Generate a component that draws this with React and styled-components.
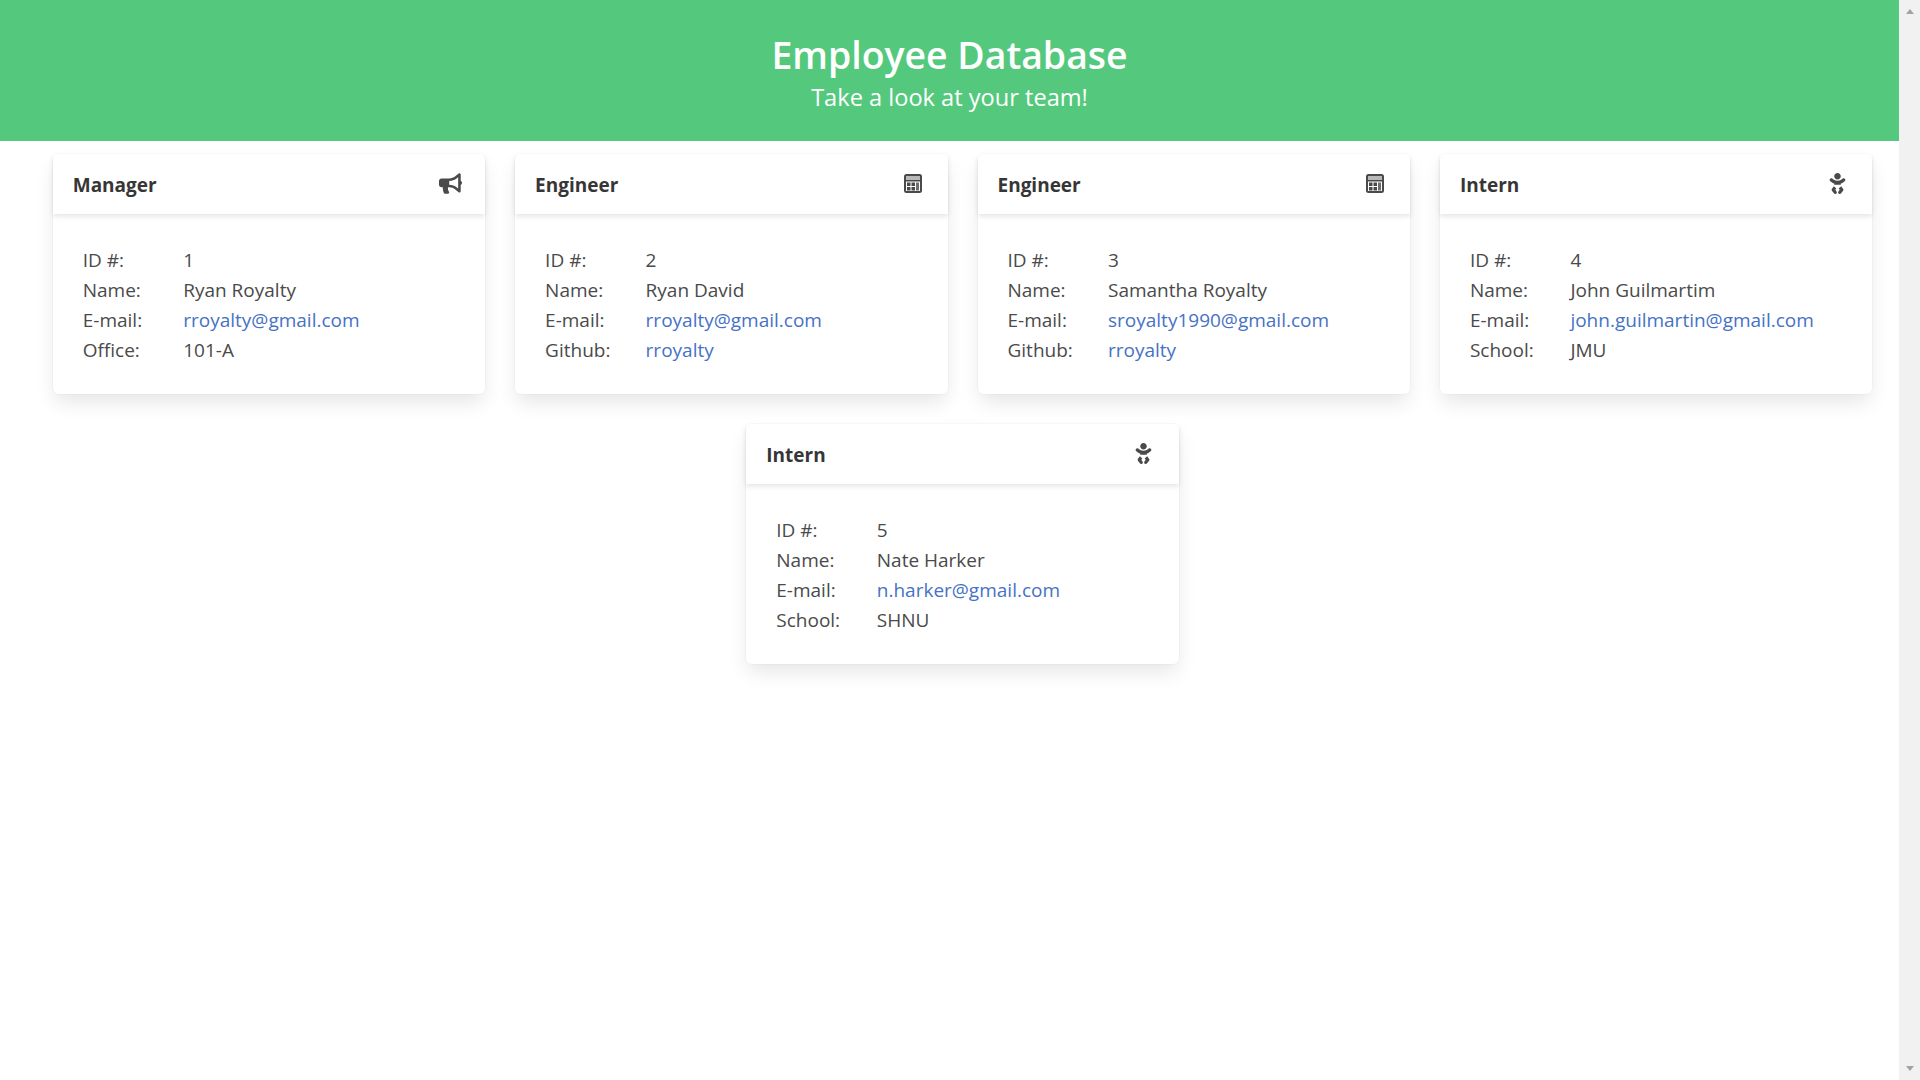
import React from "react";
import styled, { createGlobalStyle } from "styled-components";
import { FaBullhorn, FaBaby } from "react-icons/fa";

const GlobalStyle = createGlobalStyle`
  html, body {
    margin: 0;
    padding: 0;
    height: 100%;
    overflow: hidden;
    background: #fff;
  }
  #root {
    height: 100%;
  }
`;

const Page = styled.div`
  display: flex;
  height: 1080px;
  font-family: "Open Sans", "Noto Sans", sans-serif;
  font-size: 19px;
  line-height: 30px;
  color: #4a4a4a;
`;

const Main = styled.main`
  flex: 1;
  min-width: 0;
`;

const Hero = styled.header`
  height: 141px;
  box-sizing: border-box;
  padding-top: 30px;
  background: #54c97d;
  color: #fff;
  text-align: center;
`;

const Title = styled.h1`
  margin: 0;
  font-size: 37.4px;
  line-height: 50px;
  font-weight: 600;
`;

const Subtitle = styled.h2`
  margin: 0;
  padding-top: 2px;
  font-size: 23.6px;
  line-height: 30px;
  font-weight: 400;
`;

const Cards = styled.section`
  display: flex;
  flex-wrap: wrap;
  justify-content: center;
  gap: 30px;
  padding: 13px 26px 0 52px;
`;

const Card = styled.article`
  width: 432.4px;
  height: 240px;
  background: #fff;
  border-radius: 6px;
  box-shadow: 0 10px 20px -2.5px rgba(10, 10, 10, 0.1),
    0 0 0 1px rgba(10, 10, 10, 0.02);
`;

const CardHeader = styled.div`
  display: flex;
  align-items: center;
  justify-content: space-between;
  height: 60px;
  padding: 2px 23px 0 20px;
  box-sizing: border-box;
  box-shadow: 0 2.5px 5px rgba(10, 10, 10, 0.1);
`;

const CardTitle = styled.span`
  font-weight: 700;
  color: #363636;
`;

const IconBox = styled.span`
  display: flex;
  justify-content: center;
  width: 24px;
  margin-top: -4px;
  color: #4a4a4a;
`;

const Rows = styled.dl`
  display: grid;
  grid-template-columns: 100.5px 1fr;
  margin: 0;
  padding: 31px 30px 29px;
`;

const Label = styled.dt`
  margin: 0;
`;

const Value = styled.dd`
  margin: 0;
`;

const MailLink = styled.a`
  color: #4672c4;
  text-decoration: none;
`;

const Scrollbar = styled.div`
  display: flex;
  flex-direction: column;
  justify-content: space-between;
  align-items: center;
  flex: 0 0 21px;
  padding: 9px 0;
  box-sizing: border-box;
  background: #f1f1f1;
`;

const Arrow = styled.span`
  width: 0;
  height: 0;
  border-left: 4.5px solid transparent;
  border-right: 4.5px solid transparent;
  border-${(p) => (p.$down ? "top" : "bottom")}: 5px solid #a3a3a3;
`;

const CalculatorIcon = () => (
  <svg width="18" height="19" viewBox="0 0 18 19" fill="none">
    <rect x="1" y="1" width="16" height="17" rx="1.5" stroke="currentColor" strokeWidth="2" />
    <rect x="2" y="2" width="14" height="4.5" fill="#b8b8b8" />
    <rect x="2" y="6" width="14" height="1.5" fill="currentColor" />
    <rect x="3" y="8.5" width="3.5" height="3.5" fill="currentColor" />
    <rect x="7.5" y="8.5" width="3.5" height="3.5" fill="currentColor" />
    <rect x="3" y="13" width="3.5" height="3.5" fill="currentColor" />
    <rect x="7.5" y="13" width="3.5" height="3.5" fill="currentColor" />
    <rect x="12" y="8.5" width="3" height="8" fill="#6e6e6e" />
  </svg>
);

const icons = {
  Manager: <FaBullhorn size={23} />,
  Engineer: <CalculatorIcon />,
  Intern: <FaBaby size={21} />,
};

const team = [
  { id: 1, role: "Manager", name: "Ryan Royalty", email: "rroyalty@gmail.com", extra: "Office:", value: "101-A" },
  { id: 2, role: "Engineer", name: "Ryan David", email: "rroyalty@gmail.com", extra: "Github:", value: "rroyalty", link: true },
  { id: 3, role: "Engineer", name: "Samantha Royalty", email: "sroyalty1990@gmail.com", extra: "Github:", value: "rroyalty", link: true },
  { id: 4, role: "Intern", name: "John Guilmartim", email: "john.guilmartin@gmail.com", extra: "School:", value: "JMU" },
  { id: 5, role: "Intern", name: "Nate Harker", email: "n.harker@gmail.com", extra: "School:", value: "SHNU" },
];

export default function App() {
  return (
    <Page>
      <GlobalStyle />
      <Main>
        <Hero>
          <Title>Employee Database</Title>
          <Subtitle>Take a look at your team!</Subtitle>
        </Hero>
        <Cards>
          {team.map((m) => (
            <Card key={m.id}>
              <CardHeader>
                <CardTitle>{m.role}</CardTitle>
                <IconBox>{icons[m.role]}</IconBox>
              </CardHeader>
              <Rows>
                <Label>ID #:</Label>
                <Value>{m.id}</Value>
                <Label>Name:</Label>
                <Value>{m.name}</Value>
                <Label>E-mail:</Label>
                <Value>
                  <MailLink href={`mailto:${m.email}`}>{m.email}</MailLink>
                </Value>
                <Label>{m.extra}</Label>
                <Value>
                  {m.link ? <MailLink href="#">{m.value}</MailLink> : m.value}
                </Value>
              </Rows>
            </Card>
          ))}
        </Cards>
      </Main>
      <Scrollbar>
        <Arrow />
        <Arrow $down />
      </Scrollbar>
    </Page>
  );
}
